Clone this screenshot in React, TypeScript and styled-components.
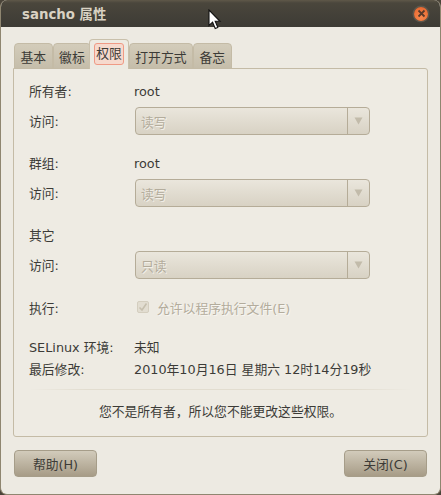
import React from "react";
import styled, { createGlobalStyle } from "styled-components";

const GlobalStyle = createGlobalStyle`
  html, body {
    margin: 0;
    padding: 0;
    background: #4a4439;
  }
  body {
    font-family: "DejaVu Sans", "Noto Sans CJK SC", sans-serif;
    font-size: 12.8px;
    color: #3c3b37;
  }
`;

const tabs = ["基本", "徽标", "权限", "打开方式", "备忘"];

const sections = [
  { label: "所有者:", owner: "root", access: "读写" },
  { label: "群组:", owner: "root", access: "读写" },
  { label: "其它", owner: "", access: "只读" }
];

const App = () => {
  return (
    <Window>
      <GlobalStyle />
      <TitleBar>
        <Title>sancho 属性</Title>
        <CloseButton>
          <svg width="9" height="9" viewBox="0 0 9 9">
            <path d="M1.5 1.5L7.5 7.5M7.5 1.5L1.5 7.5" stroke="#5a3a2a" strokeWidth="1.8" />
          </svg>
        </CloseButton>
      </TitleBar>
      <Cursor width="14" height="21" viewBox="0 0 14 21">
        <path
          d="M1 1V16.5L4.6 13.2L7.2 19.5L9.8 18.4L7.2 12.3H12Z"
          fill="#fff"
          stroke="#111"
          strokeWidth="1.1"
        />
      </Cursor>
      <Body>
        <TabStrip>
          {tabs.map((tab) => (
            <Tab key={tab} $active={tab === "权限"}>
              {tab === "权限" ? <FocusedLabel>{tab}</FocusedLabel> : tab}
            </Tab>
          ))}
        </TabStrip>
        <Panel>
          {sections.map((section) => (
            <Section key={section.label}>
              <InfoRow>
                <SectionLabel $width={105}>{section.label}</SectionLabel>
                <span>{section.owner}</span>
              </InfoRow>
              <AccessRow>
                <SectionLabel>访问:</SectionLabel>
                <Combo>
                  <ComboText>{section.access}</ComboText>
                  <ComboArrow>
                    <svg width="9" height="8" viewBox="0 0 9 8">
                      <path d="M0.5 0.5H8.5L4.5 7.5Z" fill="#c2bbaa" />
                    </svg>
                  </ComboArrow>
                </Combo>
              </AccessRow>
            </Section>
          ))}
          <ExecRow>
            <Label $width={105}>执行:</Label>
            <CheckWrap>
              <CheckBox>
                <svg width="10" height="10" viewBox="0 0 10 10">
                  <path d="M1.5 5.5L4 8L8.5 1.5" fill="none" stroke="#c6bfae" strokeWidth="1.6" />
                </svg>
              </CheckBox>
              <DisabledText>允许以程序执行文件(E)</DisabledText>
            </CheckWrap>
          </ExecRow>
          <SelinuxRow>
            <Label $width={105}>SELinux 环境:</Label>
            <span>未知</span>
          </SelinuxRow>
          <ModifiedRow>
            <Label $width={105}>最后修改:</Label>
            <span>2010年10月16日 星期六 12时14分19秒</span>
          </ModifiedRow>
          <Separator />
          <Notice>您不是所有者，所以您不能更改这些权限。</Notice>
        </Panel>
        <ButtonRow>
          <Button>帮助(H)</Button>
          <Button>关闭(C)</Button>
        </ButtonRow>
      </Body>
    </Window>
  );
};

export default App;

const Window = styled.div`
  position: relative;
  width: 441px;
  height: 495px;
  overflow: hidden;
  box-sizing: border-box;
  display: flex;
  flex-direction: column;
  background: #edeae2;
  border-radius: 7px;
  border-left: 1px solid #8f8670;
  border-right: 1px solid #8f8670;
  border-bottom: 1px solid #8f8670;
`;

const TitleBar = styled.div`
  height: 27px;
  margin: 0 -1px;
  flex: none;
  display: flex;
  align-items: center;
  justify-content: space-between;
  padding: 0 13px 0 22px;
  background: linear-gradient(#5f5849 0, #4a463c 3px, #3d3b35 100%);
`;

const Title = styled.div`
  font-weight: bold;
  font-size: 13.33px;
  color: #d9d2c3;
`;

const CloseButton = styled.div`
  width: 14px;
  height: 14px;
  border-radius: 50%;
  display: flex;
  align-items: center;
  justify-content: center;
  background: radial-gradient(circle at 50% 70%, #f98a4e, #e2602a);
  box-shadow: 0 0 0 1.5px #5c574c;
`;

const Cursor = styled.svg`
  position: absolute;
  left: 207px;
  top: 9px;
`;

const Body = styled.div`
  flex: 1;
  display: flex;
  flex-direction: column;
  padding: 15px 12px 0 12px;
`;

const TabStrip = styled.div`
  display: flex;
  align-items: flex-end;
  height: 27px;
  margin-bottom: -1px;
  padding-left: 1px;
  position: relative;
  z-index: 1;
`;

const Tab = styled.div<{ $active?: boolean }>`
  box-sizing: border-box;
  height: ${({ $active }) => ($active ? "30px" : "26px")};
  padding: 0 ${({ $active }) => ($active ? "4px" : "5.5px")};
  margin-left: ${({ $active }) => ($active ? "-2px" : "0")};
  position: relative;
  z-index: ${({ $active }) => ($active ? 1 : 0)};
  display: flex;
  align-items: center;
  border: 1px solid ${({ $active }) => ($active ? "#c9c0ab" : "#c4bba6")};
  border-bottom: ${({ $active }) => ($active ? "none" : "1px solid #c4bba6")};
  border-radius: 4px 4px 0 0;
  background: ${({ $active }) =>
    $active ? "#edeae2" : "linear-gradient(#d3ccba, #c5bdaa)"};
`;

const FocusedLabel = styled.span`
  margin-top: -2px;
  padding: 0 1px;
  border: 1px solid #ef9a85;
  border-radius: 3px;
  background: #f6d9cd;
  line-height: 20px;
`;

const Panel = styled.div`
  box-sizing: border-box;
  height: 369px;
  padding: 12px 15px 0 15px;
  border: 1px solid #c4bba6;
  border-radius: 0 3px 3px 3px;
  background: #eeebe3;
`;

const Section = styled.div`
  margin-bottom: 18px;
`;

const InfoRow = styled.div`
  display: flex;
  align-items: center;
  height: 20px;
  margin-bottom: 6px;
`;

const AccessRow = styled.div`
  display: flex;
  align-items: center;
  height: 28px;
`;

const Label = styled.div<{ $width?: number }>`
  width: ${({ $width }) => $width ?? 106}px;
  flex: none;
`;

const SectionLabel = styled(Label)`
  padding-bottom: 2px;
`;

const Combo = styled.div`
  box-sizing: border-box;
  width: 235px;
  height: 28px;
  display: flex;
  border: 1px solid #b5ac98;
  border-radius: 4px;
  background: linear-gradient(#eae6dc, #d8d2c4);
`;

const ComboText = styled.div`
  flex: 1;
  display: flex;
  align-items: center;
  padding-left: 5px;
  color: #b3ac9c;
  text-shadow: 1px 1px 0 #f3f0e9;
`;

const ComboArrow = styled.div`
  width: 21px;
  display: flex;
  align-items: center;
  justify-content: center;
  border-left: 1px solid #b5ac98;
`;

const ExecRow = styled.div`
  display: flex;
  align-items: center;
  height: 20px;
  margin-top: 9px;
`;

const CheckWrap = styled.div`
  display: flex;
  align-items: center;
  gap: 8px;
`;

const CheckBox = styled.div`
  box-sizing: border-box;
  width: 12px;
  height: 12px;
  display: flex;
  align-items: center;
  justify-content: center;
  margin-left: 3px;
  border: 1px solid #d4cebf;
  border-radius: 2px;
  background: #e2ddd1;
`;

const DisabledText = styled.span`
  color: #b3ac9c;
  text-shadow: 1px 1px 0 #f8f6f1;
`;

const SelinuxRow = styled.div`
  display: flex;
  align-items: center;
  height: 20px;
  margin-top: 19px;
`;

const ModifiedRow = styled.div`
  display: flex;
  align-items: center;
  height: 20px;
  margin-top: 2px;
  white-space: nowrap;
`;

const Separator = styled.div`
  height: 1px;
  margin-top: 11px;
  background: linear-gradient(to right, #eeebe3, #e2ddd0 15%, #e2ddd0 85%, #eeebe3);
`;

const Notice = styled.div`
  margin-top: 12px;
  height: 20px;
  line-height: 20px;
  text-align: center;
`;

const ButtonRow = styled.div`
  display: flex;
  justify-content: space-between;
  margin-top: 13px;
  padding: 0 1px;
`;

const Button = styled.div`
  box-sizing: border-box;
  width: 83px;
  height: 27px;
  display: flex;
  align-items: center;
  justify-content: center;
  border: 1px solid #a69d89;
  border-radius: 4px;
  background: linear-gradient(#d2cbbb, #a79c87);
`;
